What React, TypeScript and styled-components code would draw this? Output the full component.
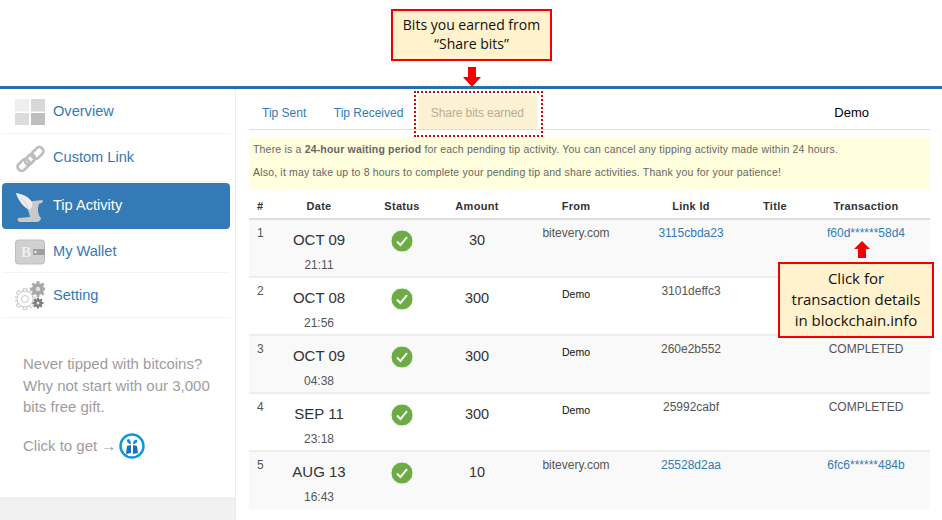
import * as React from 'react'
import styled, { createGlobalStyle } from 'styled-components'

const GlobalStyle = createGlobalStyle`
  html, body {
    margin: 0;
    padding: 0;
    background: #fff;
  }
  body {
    font-family: "Liberation Sans", Arial, sans-serif;
  }
`

const Page = styled.div`
  position: relative;
  width: 942px;
  height: 520px;
  overflow: hidden;
  background: #fff;
`

const TopSpace = styled.div`
  height: 86px;
  border-bottom: 3px solid #2a6db0;
`

const Body = styled.div`
  display: flex;
  height: 431px;
`

const Sidebar = styled.aside`
  width: 235px;
  flex: none;
  display: flex;
  flex-direction: column;
  border-right: 1px solid #eee;
`

const Nav = styled.nav`
  display: flex;
  flex-direction: column;
  padding: 0 5px 0 2px;
`

const NavItem = styled.a<{ $active?: boolean; $height: number }>`
  display: flex;
  align-items: center;
  gap: 8px;
  box-sizing: border-box;
  height: ${p => p.$height}px;
  padding-left: 13px;
  font-size: 14.6px;
  color: ${p => (p.$active ? '#fff' : '#337ab7')};
  background: ${p => (p.$active ? '#337ab7' : 'transparent')};
  border-radius: ${p => (p.$active ? '4px' : '0')};
  border-bottom: ${p => (p.$active ? '0' : '1px solid #f3f3f3')};
  margin-top: ${p => (p.$active ? '1px' : '0')};
`

const NavLabel = styled.span<{ $lift: number }>`
  padding-bottom: ${p => p.$lift}px;
`

const NavIcon = styled.svg`
  width: 30px;
  height: 30px;
  margin-top: 2px;
  flex: none;
`

const WalletLetter = styled.text`
  font-family: "Liberation Serif", serif;
  font-weight: bold;
  font-size: 15px;
  fill: #efefef;
`

const Promo = styled.div`
  flex: 1;
  padding: 35px 20px 0 23px;
  font-size: 15px;
  line-height: 21.5px;
  color: #a09c9c;
`

const PromoLine = styled.div`
  display: flex;
  align-items: center;
  gap: 4px;
  margin-top: 15px;
`

const GiftIcon = styled.svg`
  width: 26px;
  height: 26px;
  margin-left: -1px;
`

const SideFoot = styled.div`
  height: 23px;
  background: #f1f1f1;
`

const Main = styled.main`
  flex: 1;
  padding: 3px 12px 0 13px;
  display: flex;
  flex-direction: column;
`

const Tabs = styled.div`
  display: flex;
  align-items: flex-end;
  height: 37px;
  border-bottom: 1px solid #ddd;
`

const Tab = styled.a<{ $active?: boolean }>`
  display: flex;
  align-items: center;
  justify-content: center;
  height: 34px;
  padding: 2px ${p => (p.$active ? '0' : '13px')} 0;
  box-sizing: border-box;
  width: ${p => (p.$active ? '119px' : 'auto')};
  white-space: nowrap;
  font-size: 12px;
  letter-spacing: ${p => (p.$active ? '-0.1px' : '0')};
  color: ${p => (p.$active ? '#b9ad92' : '#337ab7')};
  background: ${p => (p.$active ? '#fdf1d3' : 'transparent')};
  border-radius: ${p => (p.$active ? '4px 4px 0 0' : '0')};
  margin-right: ${p => (p.$active ? '0' : '1.5px')};
`

const TabOwner = styled.div`
  margin-left: auto;
  align-self: center;
  margin-top: 3px;
  margin-right: 61px;
  font-size: 13px;
  color: #000;
`

const Notice = styled.div`
  margin-top: 8px;
  height: 51px;
  padding: 0 4px 6px;
  box-sizing: border-box;
  background: #ffffdd;
  font-size: 10.5px;
  line-height: 23px;
  letter-spacing: 0.185px;
  color: #666;
  display: flex;
  flex-direction: column;
  justify-content: center;
`

const Row = styled.div<{ $striped?: boolean; $head?: boolean; $last?: boolean }>`
  display: grid;
  grid-template-columns: 21px 98px 68px 82px 116px 114px 54px 128px;
  height: ${p => (p.$head ? '29px' : '56px')};
  align-items: ${p => (p.$head ? 'center' : 'start')};
  background: ${p => (p.$striped ? '#f9f9f9' : '#fff')};
  border-bottom: 2px solid ${p => (p.$head ? '#ddd' : p.$last ? 'transparent' : '#eee')};
`

const HeadCell = styled.div`
  padding-top: 4px;
  font-size: 11px;
  font-weight: bold;
  letter-spacing: 0.3px;
  color: #333;
  text-align: center;
  &:first-child {
    text-align: left;
    padding-left: 8px;
  }
`

const IndexCell = styled.div`
  padding: 6px 0 0 8px;
  font-size: 12px;
  line-height: 14px;
  color: #555;
`

const DateCell = styled.div`
  display: flex;
  flex-direction: column;
  align-items: center;
  padding-top: 11px;
`

const DateDay = styled.div`
  font-size: 15px;
  line-height: 18px;
  color: #333;
`

const DateTime = styled.div`
  margin-top: 9px;
  font-size: 12px;
  line-height: 14px;
  color: #555;
`

const StatusCell = styled.div`
  display: flex;
  justify-content: center;
  padding-top: 9px;
`

const AmountCell = styled.div`
  padding-top: 11px;
  font-size: 14.5px;
  line-height: 18px;
  color: #333;
  text-align: center;
`

const TextCell = styled.div<{ $small?: boolean }>`
  padding-top: ${p => (p.$small ? '9px' : '6px')};
  font-size: ${p => (p.$small ? '10.5px' : '12px')};
  line-height: 14px;
  color: ${p => (p.$small ? '#111' : '#555')};
  text-align: center;
`

const LinkCell = styled(TextCell)`
  color: #337ab7;
`

const Callout = styled.div<{ $x: number; $y: number; $w: number; $h: number; $size: number; $leading: number }>`
  position: absolute;
  left: ${p => p.$x}px;
  top: ${p => p.$y}px;
  width: ${p => p.$w}px;
  height: ${p => p.$h}px;
  box-sizing: border-box;
  padding-bottom: 2px;
  border: 2px solid #f00000;
  background: #fff2cc;
  display: flex;
  align-items: center;
  justify-content: center;
  text-align: center;
  font-family: "Open Sans", sans-serif;
  font-size: ${p => p.$size}px;
  line-height: ${p => p.$leading}px;
  color: #111;
`

const DottedFrame = styled.div`
  position: absolute;
  left: 414px;
  top: 91px;
  width: 125px;
  height: 42px;
  border: 2px dotted #e00000;
`

const Arrow = styled.svg<{ $x: number; $y: number }>`
  position: absolute;
  left: ${p => p.$x}px;
  top: ${p => p.$y}px;
`

const rows = [
  { n: 1, day: 'OCT 09', time: '21:11', amount: '30', from: 'bitevery.com', link: '3115cbda23', tx: 'f60d******58d4', isLink: true },
  { n: 2, day: 'OCT 08', time: '21:56', amount: '300', from: 'Demo', link: '3101deffc3', tx: '', isLink: false },
  { n: 3, day: 'OCT 09', time: '04:38', amount: '300', from: 'Demo', link: '260e2b552', tx: 'COMPLETED', isLink: false },
  { n: 4, day: 'SEP 11', time: '23:18', amount: '300', from: 'Demo', link: '25992cabf', tx: 'COMPLETED', isLink: false },
  { n: 5, day: 'AUG 13', time: '16:43', amount: '10', from: 'bitevery.com', link: '25528d2aa', tx: '6fc6******484b', isLink: true }
]

const CheckBadge = () => (
  <svg width="24" height="24" viewBox="0 0 24 24">
    <circle cx="12" cy="12" r="11" fill="#6cab45" stroke="#f4f8f0" strokeWidth="1" />
    <path d="M7 12.5l3.4 3.6L17 8.2" fill="none" stroke="#fff" strokeWidth="2" />
  </svg>
)

const DownArrow = () => (
  <Arrow $x={463} $y={67} width="18" height="20" viewBox="0 0 18 20">
    <path d="M5 0h8v10h5l-9 10L0 10h5z" fill="#f00000" />
  </Arrow>
)

const UpArrow = () => (
  <Arrow $x={854} $y={241} width="16" height="17" viewBox="0 0 16 17">
    <path d="M8 0l8 8h-4v9H4V8H0z" fill="#f00000" />
  </Arrow>
)

const GridIcon = () => (
  <NavIcon viewBox="0 0 30 30">
    <rect x="0" y="2" width="14" height="12.500" fill="#eeeeee" />
    <rect x="16" y="2" width="14" height="12.500" fill="#d8d8d8" />
    <rect x="0" y="16" width="14" height="12" fill="#dcdcdc" />
    <rect x="16" y="16" width="14" height="12" fill="#bfbfbf" />
  </NavIcon>
)

const ChainIcon = () => (
  <NavIcon viewBox="0 0 30 30">
    <g fill="none" stroke="#bdbdbd" strokeWidth="2.600">
      <rect x="2" y="17" width="13" height="8" rx="3.500" transform="rotate(-45 8.500 21)" />
      <rect x="9.500" y="12" width="11" height="7" rx="3" transform="rotate(-45 15 15.500)" />
      <rect x="16" y="5" width="13" height="8" rx="3.500" transform="rotate(-45 22.500 9)" />
    </g>
  </NavIcon>
)

const ScrollIcon = () => (
  <NavIcon viewBox="0 0 30 30">
    <path d="M11 10L27 8c1.500 1 1 3-3 4-2 5-1 11 2 14 0 2-2 4-4 4H6c-3 0-4-2-3-4l12-1c-1-4-2-9-4-12z" fill="#c9c9c9" />
    <path d="M1 1c7 1 13 4 16 9 1 3 0 6-3 8C9 15 3 9 1 1z" fill="#ececec" />
    <path d="M6 6c3 3 6 6 8 12" fill="none" stroke="#c9c9c9" strokeWidth="0.800" />
  </NavIcon>
)

const WalletIcon = () => (
  <NavIcon viewBox="0 0 30 30">
    <rect x="0.500" y="3" width="29" height="24" rx="3" fill="#d0d0d0" stroke="#bdbdbd" />
    <rect x="18" y="12" width="12" height="6" rx="1" fill="#9e9e9e" />
    <circle cx="20.500" cy="15" r="1.300" fill="#e6e6e6" />
    <WalletLetter x="6" y="20">B</WalletLetter>
  </NavIcon>
)

const gearTeeth = (cx: number, cy: number, r: number, n: number) =>
  Array.from({ length: n }, (_, i) => (360 / n) * i).map(a => (
    <rect key={a} x={cx - r * 0.22} y={cy - r * 1.22} width={r * 0.44} height={r * 0.5} transform={`rotate(${a} ${cx} ${cy})`} />
  ))

const GearIcon = () => (
  <NavIcon viewBox="0 0 30 30">
    <g fill="#fff" stroke="#c9c9c9" strokeWidth="1">
      {gearTeeth(10, 18, 8.500, 8)}
      <circle cx="10" cy="18" r="8" />
      <circle cx="10" cy="18" r="3.500" />
    </g>
    <g fill="#a9a9a9">
      {gearTeeth(23, 8, 6.500, 8)}
      <circle cx="23" cy="8" r="6" />
    </g>
    <circle cx="23" cy="8" r="2.200" fill="#e3e3e3" />
    <g fill="#7d7d7d">
      {gearTeeth(23, 22, 4.500, 8)}
      <circle cx="23" cy="22" r="4" />
    </g>
    <circle cx="23" cy="22" r="1.500" fill="#e3e3e3" />
  </NavIcon>
)

const App = () => (
  <Page>
    <GlobalStyle />
    <TopSpace />
    <Body>
      <Sidebar>
        <Nav>
          <NavItem $height={45}><GridIcon /><NavLabel $lift={0}>Overview</NavLabel></NavItem>
          <NavItem $height={48}><ChainIcon /><NavLabel $lift={2}>Custom Link</NavLabel></NavItem>
          <NavItem $active $height={46}><ScrollIcon /><NavLabel $lift={3}>Tip Activity</NavLabel></NavItem>
          <NavItem $height={44}><WalletIcon /><NavLabel $lift={0}>My Wallet</NavLabel></NavItem>
          <NavItem $height={45}><GearIcon /><NavLabel $lift={0}>Setting</NavLabel></NavItem>
        </Nav>
        <Promo>
          Never tipped with bitcoins?
          <br />
          Why not start with our 3,000
          <br />
          bits free gift.
          <PromoLine>
            Click to get →
            <GiftIcon viewBox="0 0 26 26">
              <circle cx="13" cy="13" r="11.500" fill="#fff" stroke="#0f97e0" strokeWidth="2.500" />
              <path d="M8 13l4-1v8l-5 1zM14 12l4 1 1 7-5 1z" fill="#1a6fb8" />
              <path d="M11 11C8 10 7 7 9 6c2 0 3 2 3 5zM14 11c0-3 2-5 4-4 1 2-1 4-4 4z" fill="#1a8fd8" />
            </GiftIcon>
          </PromoLine>
        </Promo>
        <SideFoot />
      </Sidebar>
      <Main>
        <Tabs>
          <Tab>Tip Sent</Tab>
          <Tab>Tip Received</Tab>
          <Tab $active>Share bits earned</Tab>
          <TabOwner>Demo</TabOwner>
        </Tabs>
        <Notice>
          <div>There is a <b>24-hour waiting period</b> for each pending tip activity. You can cancel any tipping activity made within 24 hours.</div>
          <div>Also, it may take up to 8 hours to complete your pending tip and share activities. Thank you for your patience!</div>
        </Notice>
        <Row $head>
          {['#', 'Date', 'Status', 'Amount', 'From', 'Link Id', 'Title', 'Transaction'].map(h => (
            <HeadCell key={h}>{h}</HeadCell>
          ))}
        </Row>
        {rows.map(r => {
          const small = r.from === 'Demo'
          return (
            <Row key={r.n} $striped={r.n % 2 === 1} $last={r.n === rows.length}>
              <IndexCell>{r.n}</IndexCell>
              <DateCell>
                <DateDay>{r.day}</DateDay>
                <DateTime>{r.time}</DateTime>
              </DateCell>
              <StatusCell><CheckBadge /></StatusCell>
              <AmountCell>{r.amount}</AmountCell>
              <TextCell $small={small}>{r.from}</TextCell>
              {r.isLink ? <LinkCell>{r.link}</LinkCell> : <TextCell>{r.link}</TextCell>}
              <TextCell />
              {r.isLink ? <LinkCell>{r.tx}</LinkCell> : <TextCell>{r.tx}</TextCell>}
            </Row>
          )
        })}
      </Main>
    </Body>
    <Callout $x={391} $y={9} $w={161} $h={52} $size={14} $leading={19}>Bits you earned from<br />“Share bits”</Callout>
    <DownArrow />
    <DottedFrame />
    <UpArrow />
    <Callout $x={778} $y={262} $w={156} $h={76} $size={15} $leading={21}>Click for<br />transaction details<br />in blockchain.info</Callout>
  </Page>
)

export default App
